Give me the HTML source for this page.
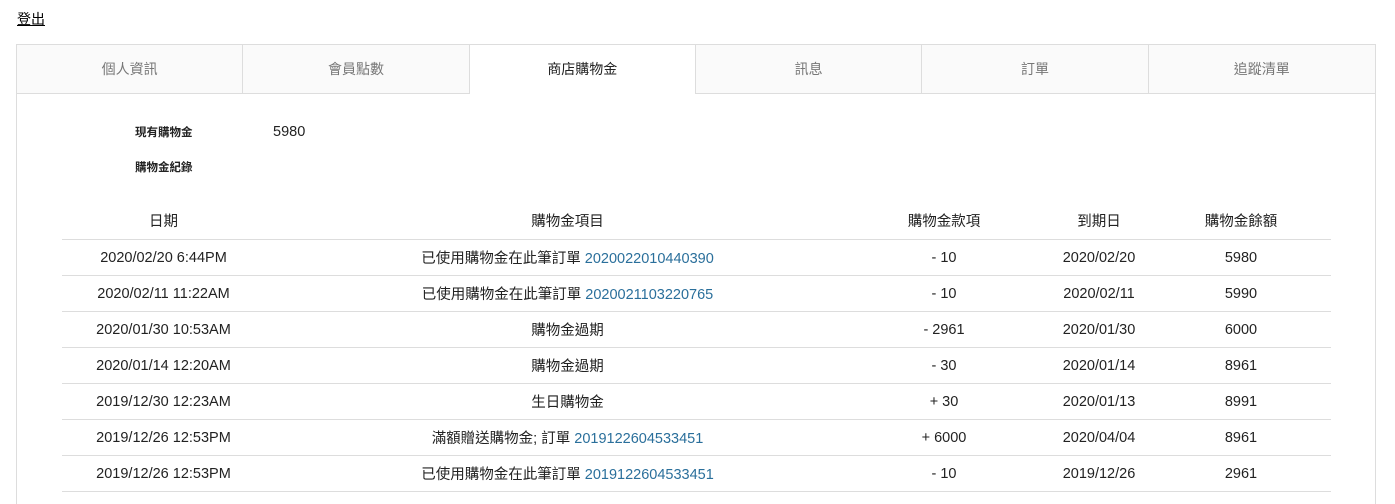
<!DOCTYPE html>
<html><head><meta charset="utf-8"><style>
*{margin:0;padding:0;box-sizing:border-box}
body{width:1395px;height:486px;overflow:hidden;background:#fff;font-family:"Liberation Sans","Noto Sans CJK TC",sans-serif;color:#222;font-size:13px}
.logout{position:absolute;left:17px;top:9px;font-size:14px;text-decoration:underline;color:#000}
.box{position:absolute;left:16px;top:44px;width:1360px;height:460px;border:1px solid #ddd;border-bottom:none}
.tabs{display:flex;height:49px}
.tab{width:226.5px;height:49px;background:#fafafa;border-right:1px solid #ddd;border-bottom:1px solid #ddd;text-align:center;line-height:49px;color:#777;font-size:14px}
.tab:last-child{border-right:none}
.tab.a{background:#fff;border-bottom:none;color:#222}
.lbl{position:absolute;left:118px;font-size:11.5px;font-weight:bold;color:#222}
.val{position:absolute;left:256px;font-size:14.5px}
table{position:absolute;left:45px;top:150px;width:1269px;border-collapse:collapse}
th{font-weight:normal;height:44px;font-size:14.5px;text-align:center;border-bottom:1px solid #ddd;padding-top:7px}
td{height:36px;text-align:center;border-bottom:1px solid #ddd;font-size:14.5px;padding-top:1px}
a{color:#2a6f9b;text-decoration:none}
</style></head><body>
<div class="logout">登出</div>
<div class="box">
<div class="tabs"><div class="tab">個人資訊</div><div class="tab">會員點數</div><div class="tab a">商店購物金</div><div class="tab">訊息</div><div class="tab">訂單</div><div class="tab">追蹤清單</div></div>
<div class="lbl" style="top:79px">現有購物金</div><div class="val" style="top:79px">5980</div>
<div class="lbl" style="top:114px">購物金紀錄</div>
<table>
<colgroup><col style="width:203px"><col style="width:605px"><col style="width:148px"><col style="width:162px"><col style="width:122px"><col style="width:29px"></colgroup>
<tr><th>日期</th><th>購物金項目</th><th>購物金款項</th><th>到期日</th><th>購物金餘額</th><th></th></tr>
<tr><td>2020/02/20 6:44PM</td><td>已使用購物金在此筆訂單 <a>2020022010440390</a></td><td>- 10</td><td>2020/02/20</td><td>5980</td><td></td></tr>
<tr><td>2020/02/11 11:22AM</td><td>已使用購物金在此筆訂單 <a>2020021103220765</a></td><td>- 10</td><td>2020/02/11</td><td>5990</td><td></td></tr>
<tr><td>2020/01/30 10:53AM</td><td>購物金過期</td><td>- 2961</td><td>2020/01/30</td><td>6000</td><td></td></tr>
<tr><td>2020/01/14 12:20AM</td><td>購物金過期</td><td>- 30</td><td>2020/01/14</td><td>8961</td><td></td></tr>
<tr><td>2019/12/30 12:23AM</td><td>生日購物金</td><td>+ 30</td><td>2020/01/13</td><td>8991</td><td></td></tr>
<tr><td>2019/12/26 12:53PM</td><td>滿額贈送購物金; 訂單 <a>2019122604533451</a></td><td>+ 6000</td><td>2020/04/04</td><td>8961</td><td></td></tr>
<tr><td>2019/12/26 12:53PM</td><td>已使用購物金在此筆訂單 <a>2019122604533451</a></td><td>- 10</td><td>2019/12/26</td><td>2961</td><td></td></tr>
</table>
</div>
</body></html>
